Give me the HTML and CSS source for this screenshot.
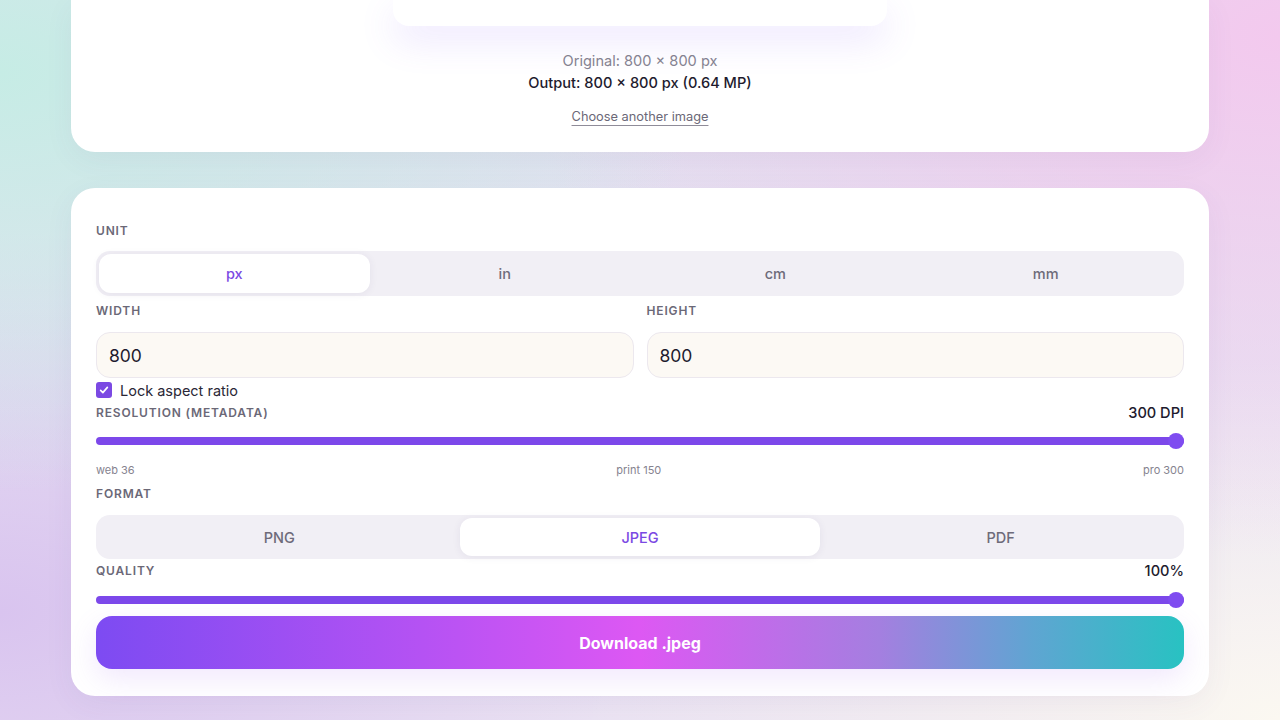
FILE: index.html
```html
<!DOCTYPE html>
<html lang="en">

<head>
    <meta charset="UTF-8">
    <meta name="viewport" content="width=device-width, initial-scale=1.0">
    <title>Resize image</title>
    <link rel="stylesheet" href="styles.css">
</head>

<body>
    <div class="page">
        <!-- preview card (scrolled, top is off screen) -->
        <section class="card preview-card">
            <div class="preview"></div>
            <p class="meta-original">Original: 800 × 800 px</p>
            <p class="meta-output">Output: 800 × 800 px (0.64 MP)</p>
            <a class="choose" href="#">Choose another image</a>
        </section>

        <!-- settings card -->
        <section class="card settings">
            <div class="field unit">
                <div class="label">UNIT</div>
                <div class="segment">
                    <button class="tab active">px</button>
                    <button class="tab">in</button>
                    <button class="tab">cm</button>
                    <button class="tab">mm</button>
                </div>
            </div>

            <div class="dims">
                <div class="field">
                    <div class="label">WIDTH</div>
                    <input class="num" type="text" value="800">
                </div>
                <div class="field">
                    <div class="label">HEIGHT</div>
                    <input class="num" type="text" value="800">
                </div>
            </div>

            <label class="lock">
                <span class="check">
                    <svg viewBox="0 0 16 16" width="12" height="12">
                        <path d="M3.5 8.5l3 3 6-7" fill="none" stroke="#fff" stroke-width="2.2" stroke-linecap="round" stroke-linejoin="round" />
                    </svg>
                </span>
                Lock aspect ratio
            </label>

            <div class="field resolution">
                <div class="label-row">
                    <div class="label">RESOLUTION (METADATA)</div>
                    <div class="value">300 DPI</div>
                </div>
                <input class="range" type="range" min="36" max="300" value="300">
                <div class="ticks">
                    <span>web 36</span>
                    <span>print 150</span>
                    <span>pro 300</span>
                </div>
            </div>

            <div class="field format">
                <div class="label">FORMAT</div>
                <div class="segment">
                    <button class="tab">PNG</button>
                    <button class="tab active">JPEG</button>
                    <button class="tab">PDF</button>
                </div>
            </div>

            <div class="field quality">
                <div class="label-row">
                    <div class="label">QUALITY</div>
                    <div class="value">100%</div>
                </div>
                <input class="range" type="range" min="10" max="100" value="100">
            </div>

            <button class="download">Download .jpeg</button>
        </section>
    </div>
</body>

</html>
```

FILE: styles.css
```css
* {
    margin: 0;
    padding: 0;
    box-sizing: border-box;
}

body {
    min-height: 720px;
    font-family: Inter, "Liberation Sans", sans-serif;
    color: #1e1b2e;
    background:
        radial-gradient(ellipse 700px 420px at 0% 10%, #c6ece5 0%, rgba(198, 236, 229, 0) 100%),
        radial-gradient(ellipse 620px 380px at 0% 85%, #d9c4ef 0%, rgba(217, 196, 239, 0) 100%),
        radial-gradient(ellipse 760px 520px at 100% 5%, #f3c9ee 0%, rgba(243, 201, 238, 0) 100%),
        radial-gradient(ellipse 700px 360px at 100% 100%, #fbf8f1 0%, rgba(251, 248, 241, 0) 100%),
        linear-gradient(180deg, #e1e2f0 0%, #ebe3f3 100%);
    overflow: hidden;
}

.page {
    width: 1138px;
    margin: 0 auto;
    display: flex;
    flex-direction: column;
    gap: 36px;
}

.card {
    background: #fff;
    border-radius: 24px;
    box-shadow: 0 8px 30px rgba(90, 70, 140, 0.06);
}

/* preview card */
.preview-card {
    border-radius: 0 0 24px 24px;
    display: flex;
    flex-direction: column;
    align-items: center;
    padding-bottom: 26px;
}

.preview {
    width: 494px;
    height: 26px;
    background: #fff;
    border-radius: 0 0 16px 16px;
    box-shadow: 0 14px 36px rgba(139, 92, 246, 0.16);
    margin-bottom: 24px;
}

.meta-original {
    font-size: 14.6px;
    line-height: 22px;
    color: #858291;
}

.meta-output {
    font-size: 14.6px;
    line-height: 22px;
    font-weight: 500;
    color: #1e1b2e;
}

.choose {
    margin-top: 14px;
    font-size: 12.8px;
    line-height: 18px;
    color: #6b6877;
    text-decoration: underline;
    text-decoration-color: #8f8c99;
    text-underline-offset: 4px;
}

/* settings card */
.settings {
    padding: 35px 25px 27px;
    display: flex;
    flex-direction: column;
}

.field {
    display: flex;
    flex-direction: column;
}

.label {
    font-size: 12px;
    line-height: 16px;
    font-weight: 600;
    letter-spacing: 0.07em;
    color: #6b6877;
    margin-bottom: 13px;
}

.unit .label {
    margin-bottom: 12px;
}

.label-row {
    display: flex;
    justify-content: space-between;
    align-items: flex-start;
}

.value {
    font-size: 14.6px;
    line-height: 16px;
    font-weight: 500;
    color: #1e1b2e;
}

.segment {
    display: flex;
    background: #f1eff5;
    border-radius: 14px;
    padding: 3px;
}

.tab {
    flex: 1;
    border: none;
    background: transparent;
    font-family: inherit;
    font-size: 14.5px;
    font-weight: 500;
    color: #6e6b7a;
    height: 39px;
    border-radius: 12px;
}

.tab.active {
    background: #fff;
    color: #7b49e3;
    box-shadow: 0 1px 8px rgba(60, 40, 100, 0.07);
}

.format .tab {
    height: 38px;
}

.dims {
    display: flex;
    gap: 13px;
    margin-top: 7px;
}

.dims .field {
    flex: 1;
}

.num {
    height: 46px;
    border: 1px solid #ece8ee;
    border-radius: 14px;
    background: #fcf9f4;
    padding: 0 12px;
    font-family: inherit;
    font-size: 17.5px;
    color: #1e1b2e;
    outline: none;
}

.lock {
    display: flex;
    align-items: center;
    gap: 8px;
    height: 20px;
    margin-top: 2px;
    font-size: 14.5px;
    color: #2a2736;
}

.check {
    width: 16px;
    height: 16px;
    border-radius: 3px;
    background: #7b49e3;
    display: flex;
    align-items: center;
    justify-content: center;
}

.resolution {
    margin-top: 5px;
}

.range {
    -webkit-appearance: none;
    appearance: none;
    width: 100%;
    height: 16px;
    background: transparent;
    outline: none;
}

.range::-webkit-slider-runnable-track {
    height: 8px;
    border-radius: 4px;
    background: #7c48ea;
}

.range::-webkit-slider-thumb {
    -webkit-appearance: none;
    width: 16px;
    height: 16px;
    border-radius: 50%;
    background: #7f4cf0;
    margin-top: -4px;
    border: none;
}

.resolution .label {
    margin-bottom: 12px;
}

.ticks {
    display: flex;
    justify-content: space-between;
    font-size: 11px;
    line-height: 14px;
    color: #86838f;
    margin-top: 14px;
}

.format {
    margin-top: 9px;
}

.quality {
    margin-top: 4px;
}

.download {
    margin-top: 8px;
    height: 53px;
    border: none;
    border-radius: 16px;
    font-family: inherit;
    font-size: 16px;
    font-weight: 700;
    color: #fff;
    background: linear-gradient(90deg, #7d4bf2 0%, #b552f3 30%, #dd58f3 50%, #a47fe0 72%, #5fa5d2 86%, #28c2c2 100%);
    box-shadow: 0 10px 28px rgba(168, 110, 245, 0.16);
}
```
